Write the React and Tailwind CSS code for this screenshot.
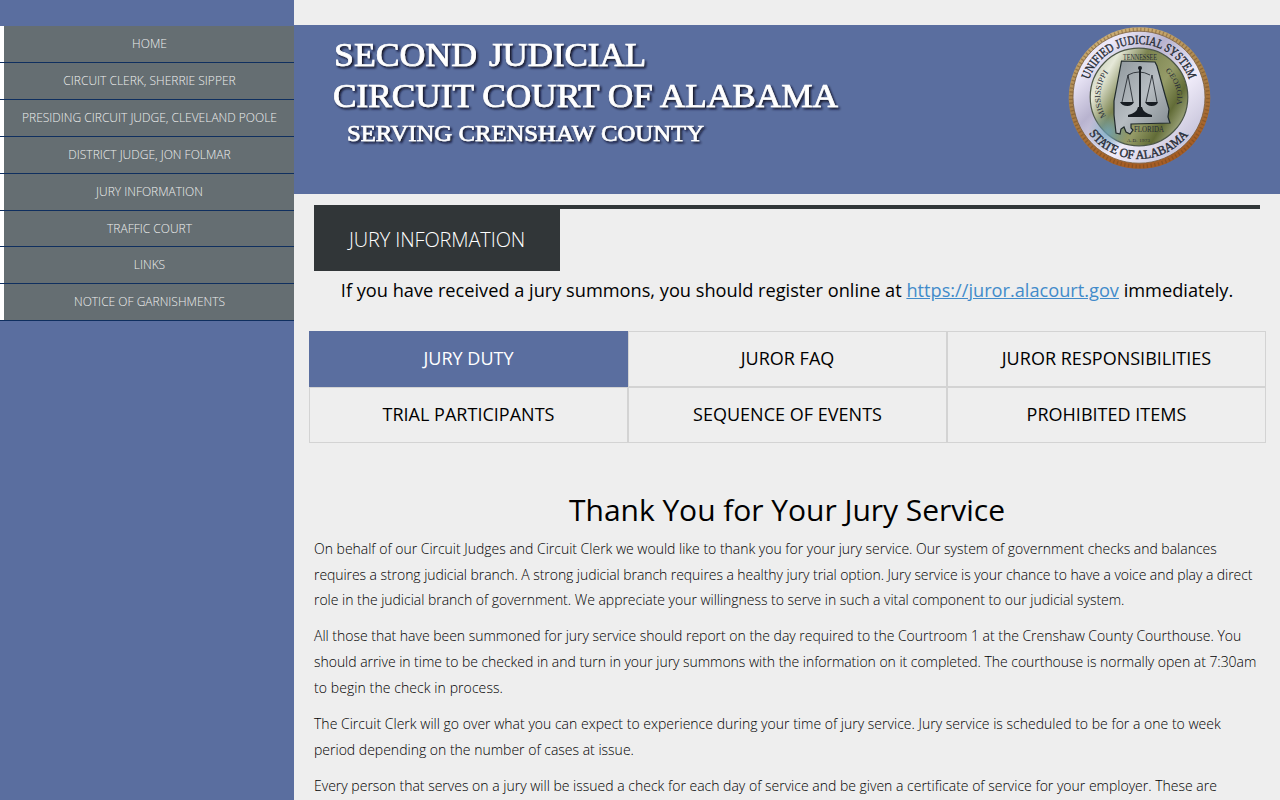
const navItems = [
  "Home",
  "Circuit Clerk, Sherrie Sipper",
  "Presiding Circuit Judge, Cleveland Poole",
  "District Judge, Jon Folmar",
  "Jury Information",
  "Traffic Court",
  "Links",
  "Notice of Garnishments",
];

const tabs = [
  "Jury Duty",
  "Juror FAQ",
  "Juror Responsibilities",
  "Trial Participants",
  "Sequence of Events",
  "Prohibited Items",
];

const paragraphs = [
  [
    ["On behalf of our Circuit Judges and Circuit Clerk we would like to thank you for your jury service. Our system of government checks and balances", "tracking-[-0.012px]"],
    ["requires a strong judicial branch. A strong judicial branch requires a healthy jury trial option. Jury service is your chance to have a voice and play a direct", "tracking-[-0.064px]"],
    ["role in the judicial branch of government. We appreciate your willingness to serve in such a vital component to our judicial system.", "tracking-[-0.026px]"],
  ],
  [
    ["All those that have been summoned for jury service should report on the day required to the Courtroom 1 at the Crenshaw County Courthouse. You", "tracking-[-0.015px]"],
    ["should arrive in time to be checked in and turn in your jury summons with the information on it completed. The courthouse is normally open at 7:30am", "tracking-[-0.034px]"],
    ["to begin the check in process.", "tracking-[0.08px]"],
  ],
  [
    ["The Circuit Clerk will go over what you can expect to experience during your time of jury service. Jury service is scheduled to be for a one to week", "tracking-[0.012px]"],
    ["period depending on the number of cases at issue.", "tracking-normal"],
  ],
  [["Every person that serves on a jury will be issued a check for each day of service and be given a certificate of service for your employer. These are", "tracking-normal"]],
];

function Wordmark() {
  return (
    <svg width="530" height="140" viewBox="320 25 530 140" className="shrink-0 font-['Liberation_Serif',serif]" role="img">
      <defs>
        <filter id="drop" x="-5%" y="-20%" width="110%" height="150%">
          <feDropShadow dx="1.7" dy="1.8" stdDeviation="0.9" floodColor="#0b1124" floodOpacity="1" />
        </filter>
      </defs>
      <g fill="#ffffff" stroke="#ffffff" strokeWidth="0.7" filter="url(#drop)">
        <text x="334" y="66" fontSize="33" textLength="143" lengthAdjust="spacingAndGlyphs">SECOND</text>
        <text x="489" y="66" fontSize="33" textLength="157" lengthAdjust="spacingAndGlyphs">JUDICIAL</text>
        <text x="333" y="107" fontSize="33.500" textLength="505" lengthAdjust="spacingAndGlyphs">CIRCUIT COURT OF ALABAMA</text>
        <text x="347" y="140.500" fontSize="23.500" strokeWidth="0.6" textLength="357" lengthAdjust="spacingAndGlyphs">SERVING CRENSHAW COUNTY</text>
      </g>
    </svg>
  );
}

function Seal() {
  return (
    <svg width="144" height="145" viewBox="-71.500 -73 144 145" className="shrink-0 font-['Liberation_Serif',serif]" role="img">
      <defs>
        <linearGradient id="rope" x1="0" y1="0" x2="0.3" y2="1">
          <stop offset="0" stopColor="#d8bd83" />
          <stop offset="0.5" stopColor="#a9834b" />
          <stop offset="1" stopColor="#a65d24" />
        </linearGradient>
        <linearGradient id="ring" x1="0" y1="0" x2="1" y2="1">
          <stop offset="0" stopColor="#d2cde5" />
          <stop offset="0.18" stopColor="#eeeafa" />
          <stop offset="0.38" stopColor="#b8b3cf" />
          <stop offset="0.62" stopColor="#f0ecfa" />
          <stop offset="0.85" stopColor="#c9c6dc" />
          <stop offset="1" stopColor="#a6a4b4" />
        </linearGradient>
        <linearGradient id="field" x1="0" y1="0.2" x2="1" y2="0.8">
          <stop offset="0" stopColor="#c3cbb6" />
          <stop offset="0.15" stopColor="#e6e9d9" />
          <stop offset="0.36" stopColor="#7c8450" />
          <stop offset="0.62" stopColor="#959b68" />
          <stop offset="0.8" stopColor="#626c37" />
          <stop offset="1" stopColor="#b6bc9a" />
        </linearGradient>
        <linearGradient id="state" x1="0" y1="0" x2="1" y2="1">
          <stop offset="0" stopColor="#8d969b" />
          <stop offset="0.5" stopColor="#b7bdc2" />
          <stop offset="1" stopColor="#7d868b" />
        </linearGradient>
        <radialGradient id="glint"><stop offset="0" stopColor="#6fa5bd" /><stop offset="1" stopColor="#6fa5bd" stopOpacity="0" /></radialGradient>
        <path id="arcTop" d="M-53 0A53 53 0 0 1 53 0" />
        <path id="arcBottom" d="M-62 0A62 62 0 0 0 62 0" />
        <path id="arcLeft" d="M-31 22A38 38 0 0 1 -24 -31" />
        <path id="arcRight" d="M24 -28A37 37 0 0 1 33 20" />
      </defs>
      <circle r="70.800" fill="url(#rope)" />
      <circle r="68.500" fill="none" stroke="#62401f" strokeWidth="3.600" strokeDasharray="1.300 2.500" opacity=".4" />
      <circle cx="-.5" cy="-.8" r="66" fill="url(#ring)" stroke="#765b3b" strokeWidth=".8" />
      <g transform="translate(-.5 -1)">
        <circle r="48.800" fill="url(#field)" stroke="#4c5646" strokeWidth="1.200" />
        <circle cx="-31" cy="35" r="20" fill="url(#glint)" opacity=".8" />
        <path d="M-17.500 -36L16 -35L18 -31L26 -2L30 12L29 20L31 26L-8 27L-8 31L-6 33L-9 37L-13 35L-15 30L-18 32L-19 37L-23 36L-25 18L-25 4Z" fill="url(#state)" stroke="#202a2c" strokeWidth="1.200" />
        <g fill="none" stroke="#171c22" strokeWidth=".8">
          <path d="M-11 -22Q0 -28 11 -22M-11 -22L-17 5M-11 -22L-6 5M13 -22L7 5M13 -22L18 5" />
          <path d="M1 -29V15" strokeWidth="2" />
        </g>
        <g fill="#171c22">
          <circle cx="1" cy="-29" r="2" />
          <path d="M-19 5H-5Q-7 9 -11.500 9Q-17 9 -19 5ZM6 5H19Q18 9 12.500 9Q8 9 6 5ZM-1 10H3Q4 16 13 18V20H-11V18Q-2 16 -1 10Z" />
        </g>
        <g fill="#282d37">
          <text fontSize="12.500" stroke="#282d37" strokeWidth=".4"><textPath href="#arcTop" startOffset="17.500" textLength="131" lengthAdjust="spacingAndGlyphs">UNIFIED JUDICIAL SYSTEM</textPath></text>
          <text fontSize="12.500" stroke="#282d37" strokeWidth=".4"><textPath href="#arcBottom" startOffset="39" textLength="115" lengthAdjust="spacingAndGlyphs">STATE OF ALABAMA</textPath></text>
          <text x="-16" y="-37.500" fontSize="7.500" textLength="34" lengthAdjust="spacingAndGlyphs">TENNESSEE</text>
          <text x="-5" y="35" fontSize="7.500" textLength="30" lengthAdjust="spacingAndGlyphs">FLORIDA</text>
          <text x="-12" y="45" fontSize="5" textLength="23">A.D. 1973</text>
          <text fontSize="8"><textPath href="#arcLeft" startOffset="3" textLength="47" lengthAdjust="spacingAndGlyphs">MISSISSIPPI</textPath></text>
          <text fontSize="7.500"><textPath href="#arcRight" startOffset="3" textLength="37" lengthAdjust="spacingAndGlyphs">GEORGIA</textPath></text>
        </g>
      </g>
    </svg>
  );
}

export default function App() {
  return (
    <div className="flex h-[800px] w-[1280px] overflow-hidden bg-[#eeeeee] font-['Open_Sans',sans-serif] text-black">
      <aside className="w-[294px] shrink-0 bg-[#5a6e9f] pt-[26px]">
        <nav>
          {navItems.map((item, i) => (
            <div key={item} className={"border-b border-[#0f2f5f] bg-white pl-1 " + (i === 5 ? "h-9" : "h-[37px]")}>
              <a className="flex h-full items-start justify-center bg-[#656e72] pt-[10px] pl-px text-xs font-light whitespace-nowrap text-[#eeeeee] uppercase">{item}</a>
            </div>
          ))}
        </nav>
      </aside>
      <main className="w-[986px] shrink-0 pt-[25px]">
        <header className="flex h-[169px] items-start justify-between bg-[#5a6e9f] pr-[68px] pl-[26px]">
          <Wordmark />
          <Seal />
        </header>
        <section className="px-5 pt-[11px]">
          <div className="flex h-[66px] border-t-4 border-[#313638]">
            <h1 className="flex w-[246px] items-center justify-center bg-[#313638] text-xl font-light tracking-[-0.120px] text-white uppercase">Jury Information</h1>
          </div>
          <p className="pt-[6px] text-center text-[18.200px] leading-[26px] whitespace-nowrap">
            If you have received a jury summons, you should register online at <a className="text-[#428bca] underline">https://juror.alacourt.gov</a> immediately.
          </p>
          <div className="-mx-[5px] mt-7 grid w-[957px] grid-cols-3">
            {tabs.map((tab, i) => (
              <button key={tab} className={"flex h-14 items-center justify-center border pb-[3px] text-lg tracking-[0.020px] uppercase " + (i === 0 ? "border-[#5a6e9f] bg-[#5a6e9f] text-white" : "border-[#d3d3d3]")}>{tab}</button>
            ))}
          </div>
          <h2 className="mt-[50px] text-center text-[30px] leading-[33px] tracking-[-0.030px]">Thank You for Your Jury Service</h2>
          <div className="mt-[9.600px] flex flex-col gap-[10px] text-sm leading-[25.900px] font-light text-black">
            {paragraphs.map((lines) => (
              <p key={lines[0][0]} className="whitespace-nowrap">
                {lines.map(([line, tracking]) => <span key={line} className={"block " + tracking}>{line}</span>)}
              </p>
            ))}
          </div>
        </section>
      </main>
    </div>
  );
}
